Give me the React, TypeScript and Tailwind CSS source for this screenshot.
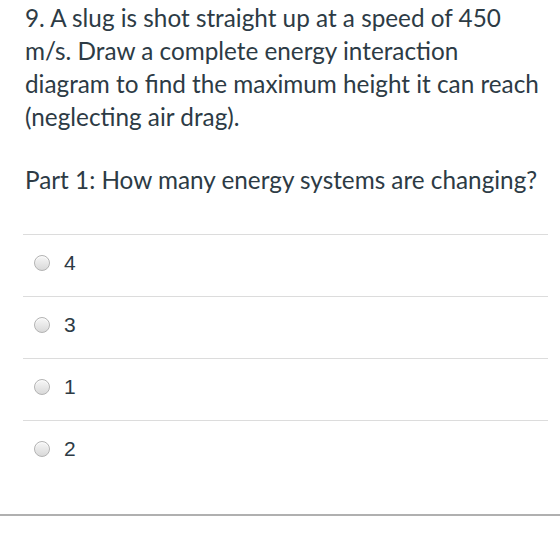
const answers = ['4', '3', '1', '2']

function Radio() {
  return (
    <span className="block h-[16px] w-[16px] shrink-0 rounded-full border border-[#b3b3b3] bg-gradient-to-b from-[#f7f7f7] to-[#d9d9d9] shadow-[inset_0_1px_1px_rgba(255,255,255,0.8)]" />
  )
}

export default function App() {
  return (
    <div className="h-[547px] w-[560px] overflow-hidden bg-white text-[#2d3b45]">
      <div className="pl-[25px] pt-[1px] font-['Lato','Noto_Sans',sans-serif] text-[24.3px] leading-[33px]">
        <p className="whitespace-nowrap">
          9. A slug is shot straight up at a speed of 450
          <br />
          m/s. Draw a complete energy interaction
          <br />
          diagram to find the maximum height it can reach
          <br />
          (neglecting air drag).
        </p>
        <p className="mt-[30px] whitespace-nowrap">Part 1: How many energy systems are changing?</p>
      </div>

      <div className="ml-[23px] mr-[12px] mt-[38px]">
        {answers.map((a) => (
          <label
            key={a}
            className="flex h-[62px] items-center gap-[14px] border-t border-[#dcdcdc] pb-[6px] pl-[11px] font-['Liberation_Sans',Arial,sans-serif] text-[21px]"
          >
            <Radio />
            <span>{a}</span>
          </label>
        ))}
      </div>

      <div className="mt-[32px] h-[2px] w-full bg-[#b0b0b0]" />
    </div>
  )
}
